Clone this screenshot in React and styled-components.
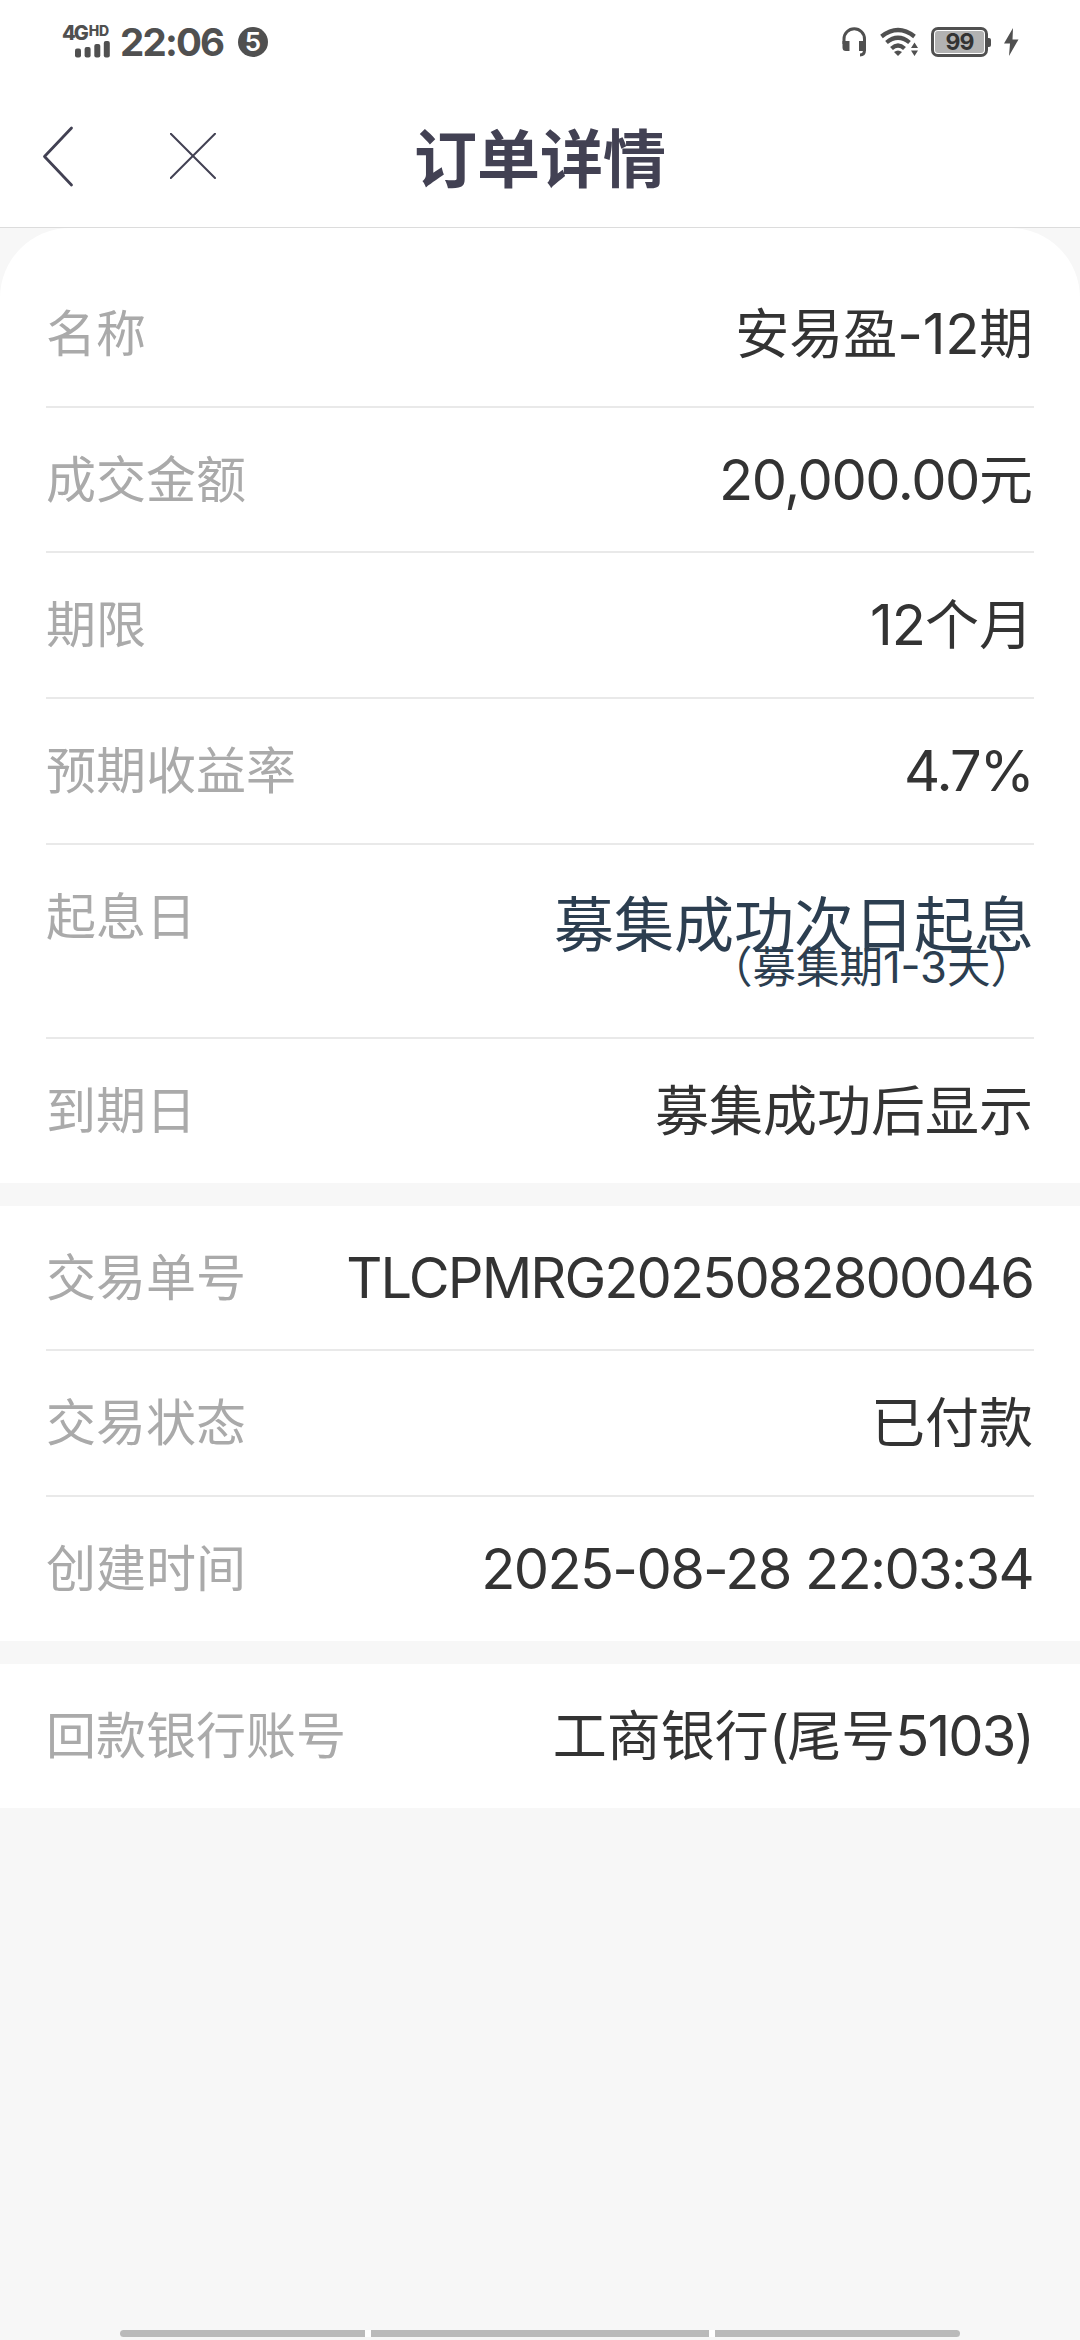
import * as React from "react"
import { createGlobalStyle, styled } from "styled-components"


const GlobalStyle = createGlobalStyle`
  * {
    box-sizing: border-box;
  }
  body {
    margin: 0;
    background-color: #f7f7f7;
    font-family: Inter, "Noto Sans CJK SC", sans-serif;
  }
`

const StyledPage = styled.div`
  display: flex;
  flex-direction: column;
  width: 1080px;
  height: 2340px;
  overflow: hidden;
  background-color: #f7f7f7;
`

const StyledStatus = styled.div`
  display: flex;
  justify-content: space-between;
  height: 84px;
  padding: 0 61px 0 62px;
  background-color: #fff;
  color: #505050;
  svg {
    display: block;
  }
`
const StatusGroup = styled.div`
  display: flex;
  align-items: center;
  svg + svg {
    margin-left: 13px;
  }
  .bolt {
    margin-left: 13px;
  }
`
const Signal = styled.div`
  width: 48px;
  height: 32px;
  .net {
    display: flex;
    align-items: flex-start;
    height: 15px;
    font-size: 20px;
    font-weight: 800;
    line-height: 15px;
    letter-spacing: -2px;
  }
  .hd {
    margin-left: 2px;
    font-size: 14px;
    line-height: 10px;
    letter-spacing: -0.2px;
  }
  svg {
    margin-left: 13px;
  }
`
const Clock = styled.div`
  width: 105px;
  margin-left: 10px;
  font-size: 38.5px;
  font-weight: 700;
  line-height: 84px;
  letter-spacing: -1.8px;
  white-space: nowrap;
`
const Badge = styled.div`
  width: 30px;
  height: 30px;
  margin-left: 13px;
  border-radius: 50%;
  background-color: #505050;
  color: #fff;
  font-size: 26px;
  font-weight: 600;
  line-height: 30px;
  text-align: center;
`
const Battery = styled.div`
  display: flex;
  align-items: center;
  margin-left: 12px;
  .shell {
    width: 57px;
    height: 30px;
    padding: 1px;
    border: 3px solid #505050;
    border-radius: 7px;
  }
  .level {
    height: 22px;
    border-radius: 3px;
    background-color: #b2b2b2;
    color: #333;
    font-size: 23px;
    font-weight: 700;
    line-height: 22px;
    letter-spacing: -1px;
    text-align: center;
  }
  .tip {
    width: 3px;
    height: 9px;
    border-radius: 0 2px 2px 0;
    background-color: #505050;
  }
`

const StyledHeader = styled.div`
  display: grid;
  grid-template-columns: 1fr auto 1fr;
  align-items: center;
  height: 144px;
  padding: 0 41px;
  border-bottom: 1px solid #dcdcdc;
  background-color: #fff;
  h1 {
    margin: 0;
    padding-top: 6px;
    color: #424153;
    font-size: 63px;
    font-weight: 700;
    line-height: 90px;
  }
  .actions {
    display: flex;
    align-items: center;
    gap: 95px;
  }
`

const Section = styled.div`
  margin-bottom: 23px;
  padding: ${(props) => (props.$first ? "34px 46px 0" : "0 46px")};
  border-radius: ${(props) => (props.$first ? "70px 70px 0 0" : "0")};
  background-color: #fff;
`
const StyledRow = styled.div`
  display: flex;
  justify-content: space-between;
  height: ${(props) => (props.$tall ? "194px" : "145.7px")};
  border-bottom: 2px solid #e9e9e9;
  line-height: 145px;
  white-space: nowrap;
  &:last-child {
    height: 144px;
    border-bottom: none;
  }
`
const Label = styled.div`
  color: #aaa;
  font-size: 50px;
`
const Value = styled.div`
  padding-right: 1px;
  color: #333;
  font-size: 54px;
`
// digits and latin letters run a little larger and tighter than the chinese text
const Latin = styled.span`
  font-size: 56px;
  font-weight: 380;
  letter-spacing: ${(props) => props.$spacing}px;
`
const StartDay = styled.div`
  display: flex;
  flex-direction: column;
  align-items: flex-end;
  padding-top: 59px;
  color: #2c3e50;
  font-size: 60px;
  line-height: 42px;
  small {
    font-size: 43.5px;
  }
`

const NavBar = styled.div`
  display: flex;
  gap: 6px;
  width: 840px;
  height: 7px;
  margin: auto auto 3px;
  border-radius: 4px;
  background-color: #fff;
  overflow: hidden;
  span {
    flex: 245;
    background-color: #bababa;
  }
  .home {
    flex: 338;
  }
`

const StatusBar = () => (
  <StyledStatus>
    <StatusGroup>
      <Signal>
        <div className="net">4G<span className="hd">HD</span></div>
        <svg width="35" height="17" viewBox="0 0 35 17" fill="#505050">
          <rect x="0" y="7.5" width="6" height="9" rx="2" />
          <rect x="9.6" y="6" width="6" height="10.5" rx="2" />
          <rect x="19.3" y="3" width="6" height="13.5" rx="2" />
          <rect x="28.8" y="0" width="6" height="16.5" rx="2" />
        </svg>
      </Signal>
      <Clock>22:06</Clock>
      <Badge>5</Badge>
    </StatusGroup>
    <StatusGroup>
      <svg width="25" height="30" viewBox="0 0 25 30">
        <path d="M2 17V12A10.2 10.2 0 0 1 22.5 12V23Q22.5 28 18 28" fill="none" stroke="#505050" strokeWidth="3" />
        <path d="M.5 14H7.5V24H4Q.5 24 .5 20.5ZM24 14H17V24H24Z" fill="#505050" />
      </svg>
      <svg width="39" height="30" viewBox="0 0 39 30">
        <g fill="none" stroke="#505050" strokeWidth="4.2">
          <path d="M1.5 9.5Q18 -3.5 34.5 9.5" />
          <path d="M6.5 15.5Q18 6 29.5 15.5" />
          <path d="M11.5 21.5Q18 15.5 24.5 21.5" />
        </g>
        <path d="M14 25Q18 22 22 25L18 29Z" fill="#505050" />
        <path d="M31 21L34.5 15.5L38 21ZM31 23.5H38L34.5 29Z" fill="#505050" />
      </svg>
      <Battery>
        <div className="shell">
          <div className="level">99</div>
        </div>
        <div className="tip" />
      </Battery>
      <svg className="bolt" width="15" height="28" viewBox="0 0 15 28">
        <path d="M9 0L0 15.5H6L5 28L14.5 11.5H8.5Z" fill="#505050" />
      </svg>
    </StatusGroup>
  </StyledStatus>
)

const Header = () => (
  <StyledHeader>
    <div className="actions">
      <svg width="34" height="64" viewBox="0 0 34 64">
        <path d="M30.5 4L3.5 32.5L30.5 61" fill="none" stroke="#424153" strokeWidth="2.8" strokeLinecap="round" strokeLinejoin="round" />
      </svg>
      <svg width="46" height="46" viewBox="0 0 46 46">
        <path d="M.8 .8L45 45M45 .8L.8 45" stroke="#424153" strokeWidth="2" strokeLinecap="round" />
      </svg>
    </div>
    <h1>订单详情</h1>
  </StyledHeader>
)

const Row = ({ label, value, spacing = 0 }) => {
  const parts = value.split(/([\x20-\x7e]+)/).filter(Boolean)
  return (
    <StyledRow>
      <Label>{label}</Label>
      <Value>
        {parts.map((part, i) =>
          /^[\x20-\x7e]/.test(part) ? <Latin key={i} $spacing={spacing}>{part}</Latin> : part
        )}
      </Value>
    </StyledRow>
  )
}

const App = () => {
  return (
    <StyledPage>
      <GlobalStyle />
      <StatusBar />
      <Header />

      <Section $first>
        <Row label="名称" value="安易盈-12期" spacing={-0.3} />
        <Row label="成交金额" value="20,000.00元" spacing={-1.4} />
        <Row label="期限" value="12个月" spacing={-1} />
        <Row label="预期收益率" value="4.7%" spacing={-1.8} />
        <StyledRow $tall>
          <Label>起息日</Label>
          <StartDay>
            <div>募集成功次日起息</div>
            <small>（募集期1-3天）</small>
          </StartDay>
        </StyledRow>
        <Row label="到期日" value="募集成功后显示" />
      </Section>

      <Section>
        <Row label="交易单号" value="TLCPMRG2025082800046" spacing={-1.9} />
        <Row label="交易状态" value="已付款" />
        <Row label="创建时间" value="2025-08-28 22:03:34" spacing={-1.65} />
      </Section>

      <Section>
        <Row label="回款银行账号" value="工商银行(尾号5103)" spacing={-1.9} />
      </Section>

      <NavBar>
        <span />
        <span className="home" />
        <span />
      </NavBar>
    </StyledPage>
  )
}

export default App
